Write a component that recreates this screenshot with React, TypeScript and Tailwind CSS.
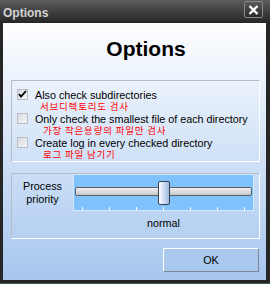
import React from "react";

const rows = [
  { en: "Also check subdirectories", ko: "서브디렉토리도 검사", checked: true, koPad: "pl-[5px]" },
  { en: "Only check the smallest file of each directory", ko: "가장 작은용량의 파일만 검사", checked: false, koPad: "pl-[8px]" },
  { en: "Create log in every checked directory", ko: "로그 파일 남기기", checked: false, koPad: "pl-[8px]" },
];

function Check({ checked }: { checked: boolean }) {
  return (
    <div className="w-[11px] h-[11px] border border-[#b8bcc4] bg-gradient-to-br from-[#d8dadf] to-[#f6f6f8] flex items-center justify-center shrink-0">
      {checked && (
        <svg width="9" height="9" viewBox="0 0 9 9">
          <path d="M1 4 L3 6.5 L8 1" stroke="#000" strokeWidth="1.8" fill="none" />
        </svg>
      )}
    </div>
  );
}

export default function App() {
  const ticks = [0, 1, 2, 3, 4, 5, 6];
  return (
    <div
      className="w-[270px] h-[284px] flex flex-col bg-[#262626] border-b border-b-[#3c5a48] overflow-hidden"
      style={{ fontFamily: '"Liberation Sans", Arial, sans-serif' }}
    >
      {/* title bar */}
      <div className="h-[23px] shrink-0 flex items-center justify-between pl-[3px] pr-[7px] bg-gradient-to-b from-[#5e5e5e] via-[#404040] to-[#262626]">
        <span className="text-[12px] font-bold text-[#d4d4d4] leading-none mt-[2px]">Options</span>
        <div className="w-[19px] h-[17px] -mt-[4px] rounded-[2px] border border-[#8a8a8a] bg-gradient-to-b from-[#5a5a5a] to-[#2a2a2a] flex items-center justify-center">
          <svg width="11" height="10" viewBox="0 0 11 10">
            <path d="M1.5 1 L9.5 9 M9.5 1 L1.5 9" stroke="#fff" strokeWidth="2.4" />
          </svg>
        </div>
      </div>

      {/* client */}
      <div className="flex-1 ml-[3px] mr-[4px] mb-[3px] flex flex-col pl-[8px] pr-[6px] bg-gradient-to-b from-white to-[#a6c6ee]">
        <div className="h-[57px] shrink-0 flex items-center justify-center pb-[7px] pl-[21px]">
          <span className="text-[21px] font-bold text-black leading-none">Options</span>
        </div>

        {/* group 1 */}
        <div className="h-[82px] shrink-0 border-t border-l border-t-[#b4bcc8] border-l-[#b4bcc8] border-b border-r border-b-white border-r-white pt-[8px] pl-[5px] flex flex-col gap-[1px]">
          {rows.map((r) => (
            <div key={r.en} className="flex items-start gap-[7px] h-[23px]">
              <Check checked={r.checked} />
              <div className="flex flex-col">
                <span className="text-[10.75px] leading-[12px] h-[12px] text-black whitespace-nowrap">{r.en}</span>
                <span
                  className={`text-[9.5px] leading-[11px] h-[11px] tracking-[0.8px] text-[#ff0000] whitespace-nowrap ${r.koPad}`}
                  style={{ fontFamily: '"Noto Sans CJK KR", sans-serif' }}
                >
                  {r.ko}
                </span>
              </div>
            </div>
          ))}
        </div>

        {/* group 2 */}
        <div className="h-[66px] mt-[11px] shrink-0 border-t border-l border-t-[#b4bcc8] border-l-[#b4bcc8] border-b border-r border-b-white border-r-white flex flex-col">
          <div className="flex items-center">
            <div className="w-[61px] flex flex-col items-center text-[10.75px] leading-[13px] text-black">
              <span>Process</span>
              <span>priority</span>
            </div>
            <div className="w-[181px] h-[37px] border border-[#d4e8fb] bg-[#80c2fc] flex flex-col px-[1px]">
              <div className="relative h-[32px] flex items-center">
                <div className="w-full h-[9px] rounded-[2px] border border-[#5c6066] bg-gradient-to-b from-[#f0f0f0] to-[#c8c8cc]" />
                <div className="absolute left-[83px] top-[6px] w-[12px] h-[24px] rounded-[2px] border border-[#3c4450] bg-gradient-to-r from-white to-[#9fb8e2]" />
              </div>
              <div className="flex justify-between px-[7px] h-[3px]">
                {ticks.map((t) => (
                  <div key={t} className="w-[1px] h-[3px] bg-white" />
                ))}
              </div>
            </div>
          </div>
          <div className="flex pl-[61px] mt-[6px]">
            <div className="w-[181px] text-center text-[10.75px] leading-[12px] text-black">normal</div>
          </div>
        </div>

        {/* OK */}
        <div className="mt-[9px] flex justify-end pr-[1px]">
          <div className="w-[96px] h-[24px] border-t border-l border-t-white border-l-white border-b border-r border-b-[#7d8590] border-r-[#7d8590] bg-[#a9c8ee] flex items-center justify-center text-[10.75px] text-black">
            OK
          </div>
        </div>
      </div>
    </div>
  );
}
